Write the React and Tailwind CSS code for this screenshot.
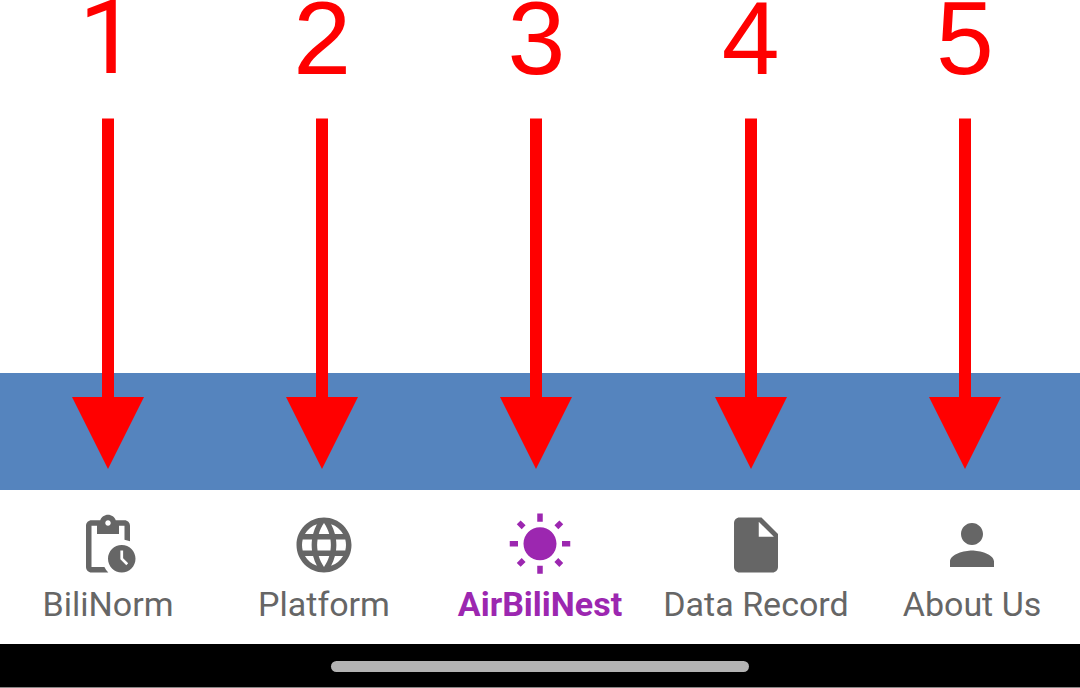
import { MdPendingActions, MdLanguage, MdWbSunny, MdInsertDriveFile, MdPerson } from "react-icons/md";

const tabs = [
  { label: "BiliNorm", Icon: MdPendingActions },
  { label: "Platform", Icon: MdLanguage },
  { label: "AirBiliNest", Icon: MdWbSunny, active: true },
  { label: "Data Record", Icon: MdInsertDriveFile },
  { label: "About Us", Icon: MdPerson },
];

function Arrow() {
  return (
    <svg width="72" height="351" viewBox="0 0 72 351" fill="#ff0000" aria-hidden="true">
      <rect x="30" y="0.5" width="12" height="279" />
      <path d="M0 279H72L36 351Z" />
    </svg>
  );
}

// The numeral 1 is set in Roboto, whose 1 has no foot.
function Callouts() {
  return (
    <ol className="col-start-1 row-span-2 row-start-1 grid grid-cols-5 pr-2 pb-5 pl-px">
      {tabs.map((tab, i) => (
        <li key={tab.label} className="flex flex-col items-center gap-[42px] first:font-['Roboto',sans-serif]">
          <span className="text-[104px] leading-[76px] text-[#ff0000]">{i + 1}</span>
          <Arrow />
        </li>
      ))}
    </ol>
  );
}

function BottomNav() {
  return (
    <nav className="grid grid-cols-5 bg-white pt-[22px] pb-[22px] font-['Roboto',sans-serif]">
      {tabs.map(({ label, Icon, active }) => (
        <button
          key={label}
          type="button"
          aria-current={active ? "page" : undefined}
          className={
            active
              ? "flex flex-col items-center gap-2 font-bold text-[#9c27b0]"
              : "flex flex-col items-center gap-2 text-[#666666]"
          }
        >
          <Icon size={66} aria-hidden="true" />
          <span className="text-[34px] leading-[36px] whitespace-nowrap">{label}</span>
        </button>
      ))}
    </nav>
  );
}

export default function App() {
  return (
    <div className="bg-white font-['Liberation_Sans',Arial,sans-serif]">
      <main className="grid grid-rows-[373px_117px]">
        <div className="col-start-1 row-start-2 bg-[#5584be]" />
        <Callouts />
      </main>
      <BottomNav />
      <footer className="flex justify-center border-b border-[#8a8686] bg-black pt-[17px] pb-[15px]">
        <div className="h-[11px] w-[418px] rounded-full bg-[#b3b3b3]" />
      </footer>
    </div>
  );
}
